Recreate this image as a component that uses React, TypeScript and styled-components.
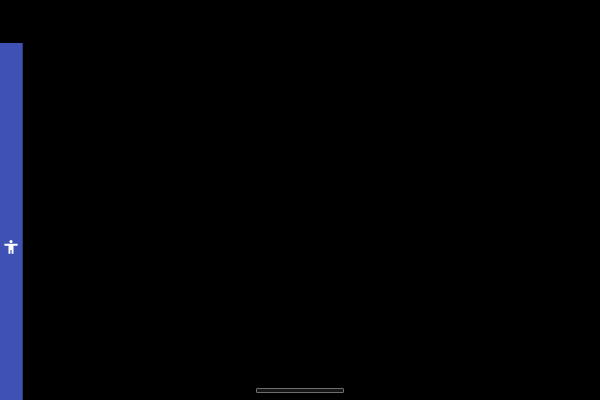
import React from 'react';
import styled, { createGlobalStyle } from 'styled-components';

const Global = createGlobalStyle`
  html, body, #root {
    margin: 0;
    width: 100%;
    height: 100%;
    background: #000;
  }
`;

const Screen = styled.div`
  position: relative;
  width: 600px;
  height: 400px;
  padding-top: 43px;
  box-sizing: border-box;
  background: #000;
  overflow: hidden;
`;

const Sidebar = styled.div`
  width: 23px;
  height: 100%;
  padding-top: 197px;
  box-sizing: border-box;
  display: flex;
  justify-content: center;
  align-items: flex-start;
  background: #3f51b5;
  border-right: 1px solid #2c3a80;
`;

const HomeBar = styled.div`
  position: absolute;
  left: 256px;
  bottom: 7px;
  width: 88px;
  height: 5px;
  box-sizing: border-box;
  border: 1px solid #6e6e6e;
  border-radius: 1px;
  background: #151515;
`;

const PersonIcon = () => (
  <svg width="14" height="14" viewBox="0 0 14 14" fill="#fff">
    <circle cx="7" cy="1.6" r="1.6" />
    <path d="M0.4 3.8h13.2v1.9H9.5v8.1H7.6V10H6.4v3.8H4.5V5.7H0.4z" />
  </svg>
);

export default function App() {
  return (
    <Screen>
      <Global />
      <Sidebar>
        <PersonIcon />
      </Sidebar>
      <HomeBar />
    </Screen>
  );
}
